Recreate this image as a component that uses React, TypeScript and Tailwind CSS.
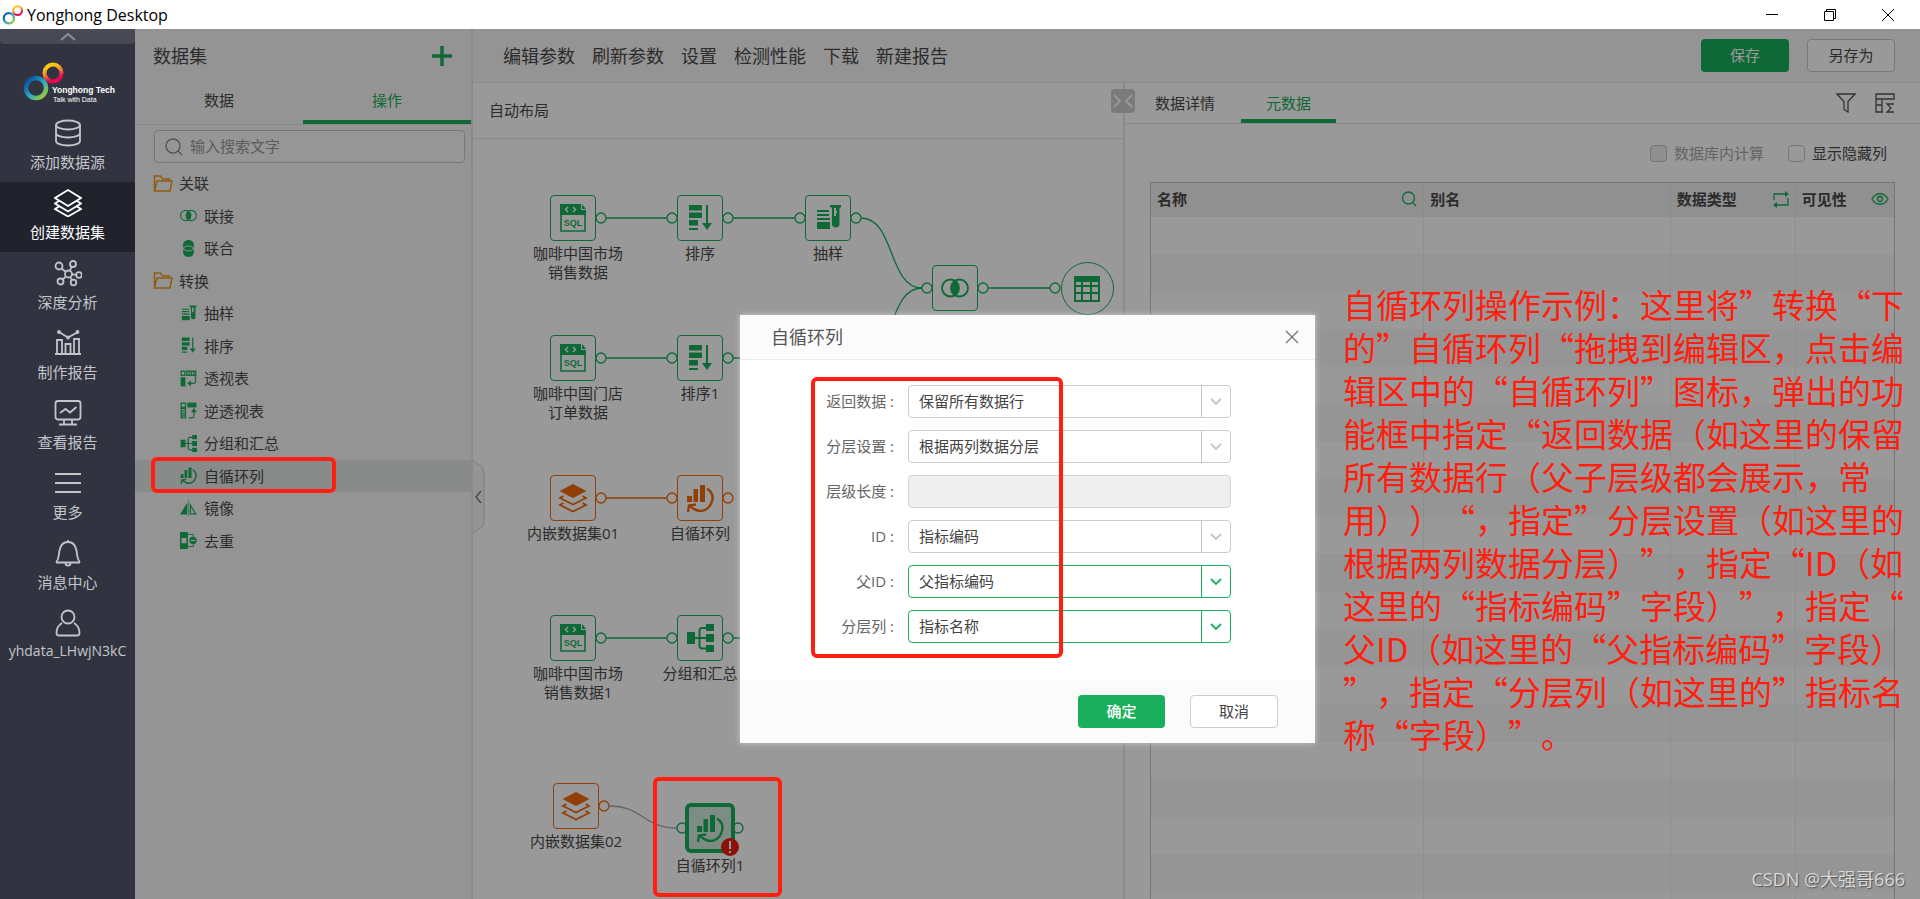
import { ReactNode } from 'react';
import clsx from 'clsx';

type IconProps = { name: string; className?: string };

// Line icons of the dark navigation bar, 28x28
const navIcons: Record<string, ReactNode> = {
  database: (
    <>
      <ellipse cx="14" cy="6" rx="12" ry="4.5" />
      <path d="M2 6v16c0 2.500 5 4.500 12 4.500s12-2 12-4.500V6M2 14c0 2.500 5 4.500 12 4.500s12-2 12-4.500" />
    </>
  ),
  layers: (
    <>
      <path d="M14 1 27 9 14 17 1 9z" />
      <path d="M5 12 1 14.500l13 8 13-8L23 12M5 17.500 1 20l13 7.500L27 20l-4-2.500" />
    </>
  ),
  network: (
    <>
      <circle cx="14.500" cy="15" r="3.500" />
      <circle cx="5" cy="7" r="3.500" />
      <circle cx="19" cy="5" r="3" />
      <circle cx="25" cy="16" r="2.800" />
      <circle cx="19.500" cy="23.500" r="2.800" />
      <circle cx="6.500" cy="22.500" r="3" />
      <path d="m7.500 9.500 4.500 3.500m4-1.500 1.500-3.500m.5 7.500 4 .2M16 18l2.200 3M12 17.500l-3.500 3" />
    </>
  ),
  chart: (
    <>
      <path d="M1 25h26M3 25V11h5v14m3.500 0V15h5v10m3.500 0V10h5v15M5 3l9 5.500L24 3" />
      <circle cx="5" cy="3" r="1" />
      <circle cx="14" cy="8.500" r="1" />
      <circle cx="23.500" cy="3" r="1" />
    </>
  ),
  monitor: (
    <>
      <rect x="1.500" y="2" width="25" height="18.500" rx="2.500" />
      <path d="m6 14 5.500-4 4.500 3.500L22.500 8M10 20.500V25m8-4.500V25M5 25.500h18" />
    </>
  ),
  menu: <path d="M1 5h26M1 14h26M1 23h26" />,
  bell: (
    <path d="M14 1v2M2 23.500h24M2 23.500c3.500-4 2.500-7 3.500-12C6.500 6 9.500 3 14 3s7.500 3 8.500 8.500c1 5 0 8 3.500 12M11.500 24c0 3.500 5 3.500 5 0" />
  ),
  user: (
    <>
      <circle cx="14" cy="8" r="6.500" />
      <path d="M8 14C4 16.500 2.500 20 2.500 24c0 2 1 2.500 2.500 2.500h18c1.500 0 2.500-.5 2.500-2.500 0-4-1.500-7.500-5.500-10" />
    </>
  ),
};

const NavIcon = ({ name, className }: IconProps) => (
  <svg viewBox="0 0 28 28" className={className} fill="none" stroke="currentColor" strokeWidth="1.800">
    {navIcons[name]}
  </svg>
);

// Operation icons, shared by the tree and by the canvas nodes, 28x28
const opIcons: Record<string, ReactNode> = {
  join: (
    <>
      <circle cx="9.500" cy="14" r="8.500" fill="none" stroke="currentColor" strokeWidth="1.800" />
      <circle cx="18.500" cy="14" r="8.500" fill="none" stroke="currentColor" strokeWidth="1.800" />
      <path d="M14 6.500c5 4 5 11 0 15-5-4-5-11 0-15z" />
    </>
  ),
  union: (
    <>
      <path d="M14 0c6 0 9 4 9 9 0 2-.5 3.500-1.500 5 1 1.500 1.500 3 1.500 5 0 5-3 9-9 9s-9-4-9-9c0-2 .5-3.500 1.500-5C5.500 12.500 5 11 5 9c0-5 3-9 9-9z" />
      <ellipse cx="14" cy="14" rx="7.500" ry="4" fill="none" stroke="#f7f7f7" strokeWidth="1.500" />
    </>
  ),
  sample: (
    <>
      <path d="M3 6h12v2H3zM3 10h12v2H3zM3 14h13v2H3zM3 18h13v7H3z" />
      <path d="M16 1h11v2.500h-1.500V21a4 4 0 0 1-7.500 0V3.500h-2z" />
      <path d="M20 4h2v3h1v2h-1v3h-2z" fill="#fff" />
    </>
  ),
  sort: (
    <>
      <path d="M3 1h13v5.500H3zM3 8.500h13V14H3zM3 16h9v5.500H3zM3 24h9v2H3z" />
      <path d="M20 1h2v18h4l-5 7-5-7h4z" />
    </>
  ),
  pivot: (
    <>
      <path d="M1 12h8v15H1z" />
      <path d="M2 2h6v7H2zM11 2h15v7H11zM15 2v7m4-7v7m4-7v7M25.500 9v10c0 2-1 3-3 3H15" fill="none" stroke="currentColor" strokeWidth="2" />
      <path d="M12 22l6-5v10z" />
    </>
  ),
  unpivot: (
    <>
      <path d="M12 1h15v8H12z" />
      <path d="M2 2h7v7H2zM2 11h7v15H2zM2 15h7M2 19h7M2 23h7M23 15v8c0 2-1 3-3 3h-6" fill="none" stroke="currentColor" strokeWidth="2" />
      <path d="M23 10l5 7H18z" />
    </>
  ),
  group: (
    <>
      <path d="M1 8h8v12H1zM20 0h8v7h-8zM20 10h8v8h-8zM20 21h8v7h-8z" />
      <path d="M8 14h13M21 4h-5c-2 0-2.500 1-2.500 2.500v15c0 2 1 3 2.500 3h5" fill="none" stroke="currentColor" strokeWidth="2" />
    </>
  ),
  loop: (
    <>
      <path d="M1 12h5v6H1zM7.500 5h4.500v13H7.500zM14 1h5v17h-5z" />
      <path d="M21 4.500c5 3.500 6.500 8 5 12.500-2 8-9 11.500-16 9-3-1-5-3-7-5" fill="none" stroke="currentColor" strokeWidth="2.400" />
      <path d="M2 28l1-6.500 7-1" fill="none" stroke="currentColor" strokeWidth="2.400" />
    </>
  ),
  mirror: (
    <>
      <path d="M12 4v20H0z" />
      <path d="M17 8v15h9z" fill="none" stroke="currentColor" strokeWidth="2" />
      <path d="M14 0v28" stroke="currentColor" strokeWidth="1.500" strokeDasharray="2 1.500" />
    </>
  ),
  dedupe: (
    <>
      <path d="M0 0h13v28H0zM2.500 10v8.500h8V10z" fillRule="evenodd" />
      <path d="M13 4h9v20h-9" fill="none" stroke="currentColor" strokeWidth="1.500" />
      <circle cx="21.500" cy="14" r="6" />
      <path d="M18 14h7" stroke="#f7f7f7" strokeWidth="2" />
    </>
  ),
  stack: (
    <>
      <path d="m14 0 13.500 7L14 14 .5 7z" />
      <path d="M4.500 12 1 14l13 6.500L27 14l-3.500-2M4.500 19 1 21l13 6.500L27 21l-3.500-2" fill="none" stroke="currentColor" strokeWidth="1.800" />
    </>
  ),
  sql: (
    <>
      <path d="M1 0h21v6h5v5H1z" />
      <path d="M23 0l4 5h-4z" />
      <path d="M2 10h24v17H2z" fill="none" stroke="currentColor" strokeWidth="1.600" />
      <path d="M9 3 6.500 5.500 9 8m5-5 2.500 2.500L14 8" fill="none" stroke="#fff" strokeWidth="1.400" />
      <text x="14" y="22" textAnchor="middle" fontSize="9" fontWeight="bold" fontFamily="Liberation Sans, sans-serif">
        SQL
      </text>
    </>
  ),
  table: (
    <path
      fillRule="evenodd"
      d="M1 1h26v26H1zM3 7v3h5V7zm7 0v3h7V7zm9 0v3h6V7zM3 12v5h5v-5zm7 0v5h7v-5zm9 0v5h6v-5zM3 19v6h5v-6zm7 0v6h7v-6zm9 0v6h6v-6z"
    />
  ),
};

const OpIcon = ({ name, className }: IconProps) => (
  <svg viewBox="0 0 28 28" className={clsx('overflow-visible', className)} fill="currentColor">
    {opIcons[name]}
  </svg>
);

const Rings = () => (
  <>
    <defs>
      <linearGradient id="cool" x1="0" y1="0" x2="1" y2="1">
        <stop offset="0.100" stopColor="#0b55a5" />
        <stop offset="0.550" stopColor="#2fa9c4" />
        <stop offset="0.950" stopColor="#a5cf2c" />
      </linearGradient>
      <linearGradient id="warm" x1="0.200" y1="0" x2="0.600" y2="1">
        <stop offset="0.150" stopColor="#fbc916" />
        <stop offset="0.500" stopColor="#f58233" />
        <stop offset="0.850" stopColor="#e6094f" />
      </linearGradient>
    </defs>
    <circle cx="30" cy="11" r="8.500" fill="none" stroke="url(#warm)" strokeWidth="4" />
    <circle cx="13" cy="26" r="10" fill="none" stroke="url(#cool)" strokeWidth="4.500" />
  </>
);

const navItems = [
  { icon: 'database', label: '添加数据源' },
  { icon: 'layers', label: '创建数据集', active: true },
  { icon: 'network', label: '深度分析' },
  { icon: 'chart', label: '制作报告' },
  { icon: 'monitor', label: '查看报告' },
  { icon: 'menu', label: '更多' },
  { icon: 'bell', label: '消息中心' },
  { icon: 'user', label: 'yhdata_LHwjN3kC', small: true },
];

const TitleBar = () => (
  <header className="flex h-[29px] shrink-0 items-center justify-between bg-white text-black">
    <div className="flex items-center gap-[3px] pl-[2px]">
      <svg viewBox="0 0 42 39" className="h-5 w-[22px]">
        <Rings />
      </svg>
      <h1 className="text-base font-normal">Yonghong Desktop</h1>
    </div>
    <div className="flex items-center pr-[3px]">
      <button aria-label="最小化" className="flex w-[58px] justify-center">
        <svg viewBox="0 0 14 14" className="h-[14px] w-[14px]" stroke="#000">
          <path d="M1 6.500h12" />
        </svg>
      </button>
      <button aria-label="还原" className="flex w-[58px] justify-center">
        <svg viewBox="0 0 14 14" className="h-[14px] w-[14px]" stroke="#000" fill="none">
          <path d="M1.500 3.500h9v9h-9zM3.500 3V1.500h9v9H11" />
        </svg>
      </button>
      <button aria-label="关闭" className="flex w-[58px] justify-center">
        <svg viewBox="0 0 14 14" className="h-[14px] w-[14px]" stroke="#000">
          <path d="m1 1 12 12M13 1 1 13" />
        </svg>
      </button>
    </div>
  </header>
);

const Sidebar = () => (
  <nav className="flex w-[135px] shrink-0 flex-col bg-[#313440] text-[#c4c5c9]">
    <button aria-label="收起" className="flex h-[15px] shrink-0 items-center justify-center rounded-b bg-[#474954]">
      <svg viewBox="0 0 16 8" className="h-2 w-4" fill="none" stroke="#8f919a" strokeWidth="2">
        <path d="m1 7 7-6 7 6" />
      </svg>
    </button>
    <div className="h-[68px] shrink-0 pt-[18px] pl-[23px]">
      <svg viewBox="0 0 100 42" className="h-[42px] w-[100px]" fontFamily="Liberation Sans, sans-serif">
        <Rings />
        <text x="29" y="31" fontSize="8.500" fontWeight="bold" fill="#fff">
          Yonghong Tech
        </text>
        <text x="30" y="40" fontSize="7" fill="#fff">
          Talk with Data
        </text>
      </svg>
    </div>
    <ul>
      {navItems.map((item) => (
        <li key={item.label}>
          <a
            href="#"
            className={clsx(
              'flex h-[70px] flex-col items-center gap-1 pt-[7px]',
              item.small ? 'text-sm' : 'text-[15px]',
              item.active && 'bg-[#20222c] text-white',
            )}
          >
            <NavIcon name={item.icon} className="h-7 w-7" />
            <span>{item.label}</span>
          </a>
        </li>
      ))}
    </ul>
  </nav>
);

const tree = [
  { label: '关联', folder: true },
  { label: '联接', icon: 'join' },
  { label: '联合', icon: 'union' },
  { label: '转换', folder: true },
  { label: '抽样', icon: 'sample' },
  { label: '排序', icon: 'sort' },
  { label: '透视表', icon: 'pivot' },
  { label: '逆透视表', icon: 'unpivot' },
  { label: '分组和汇总', icon: 'group' },
  { label: '自循环列', icon: 'loop', selected: true },
  { label: '镜像', icon: 'mirror' },
  { label: '去重', icon: 'dedupe' },
];

const OperationPanel = () => (
  <aside className="flex w-[338px] shrink-0 flex-col border-r-2 border-[#e6e6e6] bg-[#f7f7f7]">
    <div className="flex h-[53px] shrink-0 items-center justify-between pr-[18px] pl-[18px]">
      <h2 className="text-lg">数据集</h2>
      <button aria-label="新建" className="text-[#1aaf5d]">
        <svg viewBox="0 0 22 22" className="h-[22px] w-[22px]" stroke="currentColor" strokeWidth="3.500">
          <path d="M11 1v20M1 11h20" />
        </svg>
      </button>
    </div>
    <div className="grid h-[43px] shrink-0 grid-cols-2 border-b border-[#e6e6e6] text-[15px]">
      <button className="pb-[6px]">数据</button>
      <button className="border-b-4 border-[#1aaf5d] pb-[2px] text-[#1aaf5d]">操作</button>
    </div>
    <label className="mt-[5px] mr-[6px] ml-[19px] flex h-[33px] shrink-0 items-center gap-[7px] rounded-sm border border-[#c8c8c8] bg-[#fbfbfb] pl-[10px] text-[#8a8a8a]">
      <svg viewBox="0 0 18 18" className="h-[18px] w-[18px]" fill="none" stroke="currentColor" strokeWidth="1.300">
        <circle cx="8" cy="8" r="7" />
        <path d="m13 13 4 4" />
      </svg>
      <input
        aria-label="搜索"
        placeholder="输入搜索文字"
        className="min-w-0 flex-1 bg-transparent text-[15px] outline-none placeholder:text-[#999]"
      />
    </label>
    <ul className="mt-1 grid h-[390px] shrink-0 grid-rows-12 text-[15px]">
      {tree.map((row) => (
        <li
          key={row.label}
          className={clsx(
            'flex items-center gap-[6px]',
            row.folder ? 'pl-[18px]' : 'pl-[43px]',
            row.selected && 'bg-[#e3e8e5]',
          )}
        >
          {row.folder ? (
            <svg viewBox="0 0 20 17" className="h-[17px] w-5" fill="none" stroke="#f09a1e" strokeWidth="1.500">
              <path d="M1.500 16V1h6l2 3h7v2M1.500 16 4 6h15l-2 10z" />
            </svg>
          ) : (
            <span className="flex w-5 justify-center text-[#1aaf5d]">
              <OpIcon name={row.icon!} className="h-[17px] w-[17px]" />
            </span>
          )}
          {row.label}
        </li>
      ))}
    </ul>
  </aside>
);

const toolbar = ['编辑参数', '刷新参数', '设置', '检测性能', '下载', '新建报告'];

const Toolbar = () => (
  <div className="flex h-[54px] shrink-0 items-center justify-between border-b border-[#e6e6e6] bg-[#f7f7f7] pr-[25px] pl-[30px]">
    <div className="flex gap-[17px] text-lg">
      {toolbar.map((label) => (
        <button key={label}>{label}</button>
      ))}
    </div>
    <div className="flex gap-[18px] text-[15px]">
      <button className="h-[33px] w-[88px] rounded-sm bg-[#1aaf5d] text-white">保存</button>
      <button className="h-[33px] w-[88px] rounded-sm border border-[#c8c8c8] bg-white">另存为</button>
    </div>
  </div>
);

type FlowNode = {
  icon: string;
  x: number;
  y: number;
  label?: string[];
  labelShift?: number;
  orange?: boolean;
  input?: boolean;
  shape?: 'round' | 'selected';
};

// x and y are the centres of the nodes
const nodes: FlowNode[] = [
  { icon: 'sql', x: 100, y: 79, label: ['咖啡中国市场', '销售数据'], labelShift: 5 },
  { icon: 'sort', x: 227, y: 79, label: ['排序'], input: true },
  { icon: 'sample', x: 355, y: 79, label: ['抽样'], input: true },
  { icon: 'join', x: 482, y: 149, input: true },
  { icon: 'table', x: 614, y: 149, input: true, shape: 'round' },
  { icon: 'sql', x: 100, y: 219, label: ['咖啡中国门店', '订单数据'], labelShift: 5 },
  { icon: 'sort', x: 227, y: 219, label: ['排序1'], input: true },
  { icon: 'stack', x: 100, y: 359, label: ['内嵌数据集01'], orange: true },
  { icon: 'loop', x: 227, y: 359, label: ['自循环列'], orange: true, input: true },
  { icon: 'sql', x: 100, y: 499, label: ['咖啡中国市场', '销售数据1'], labelShift: 5 },
  { icon: 'group', x: 227, y: 499, label: ['分组和汇总'], input: true },
  { icon: 'stack', x: 103, y: 667, label: ['内嵌数据集02'], orange: true },
  { icon: 'loop', x: 237, y: 689, label: ['自循环列1'], input: true, shape: 'selected' },
];

const GREEN = '#1aaf5d';
const ORANGE = '#f0690a';

const links = [
  { d: 'M133 79H194', color: GREEN },
  { d: 'M260 79H322', color: GREEN },
  { d: 'M388 79C422 79 415 149 449 149', color: GREEN },
  { d: 'M388 219C422 219 415 149 449 149', color: GREEN },
  { d: 'M515 149H577', color: GREEN },
  { d: 'M133 219H194', color: GREEN },
  { d: 'M260 219H322', color: GREEN },
  { d: 'M133 359H194', color: ORANGE },
  { d: 'M133 499H194', color: GREEN },
  { d: 'M260 499H322', color: GREEN },
  { d: 'M136 667C170 667 170 689 204 689', color: '#a8a8a8' },
];

const Node = ({ node }: { node: FlowNode }) => {
  const color = node.orange ? ORANGE : GREEN;
  const middle = node.shape === 'round' ? 26 : node.shape === 'selected' ? 25 : 23;

  return (
    <div className="absolute flex w-0 flex-col items-center" style={{ left: node.x, top: node.y - middle, color }}>
      <button
        aria-label={node.label?.join('') ?? node.icon}
        className={clsx(
          'flex shrink-0 items-center justify-center border-current',
          !node.shape && 'h-[46px] w-[46px] rounded border',
          node.shape === 'round' && 'h-[53px] w-[53px] rounded-full border',
          node.shape === 'selected' && 'h-[50px] w-[50px] rounded-md border-4 bg-[#d3ebdd]',
        )}
      >
        <OpIcon name={node.icon} className="h-7 w-7" />
      </button>
      {node.label && (
        <div
          className="mt-[3px] text-center text-[15px] leading-[19px] whitespace-nowrap text-[#4a4a4a]"
          style={{ marginLeft: (node.labelShift ?? 0) * 2 }}
        >
          {node.label.map((line) => (
            <div key={line}>{line}</div>
          ))}
        </div>
      )}
      <svg className="absolute top-0 left-0 h-px w-px overflow-visible" fill="none" stroke="currentColor" strokeWidth="1.300">
        {node.input && <circle cx={node.shape === 'round' ? -32 : -28} cy={middle} r="5" />}
        {node.shape !== 'round' && <circle cx="28" cy={middle} r="5" />}
        {node.shape === 'selected' && (
          <>
            <circle cx="20" cy="44" r="9" fill="#ea2015" stroke="none" />
            <path d="M20 38v8m0 2v2" stroke="#fff" strokeWidth="2" />
          </>
        )}
      </svg>
    </div>
  );
};

const FlowCanvas = () => (
  <section className="relative flex min-w-0 flex-1 flex-col border-r-2 border-[#e6e6e6] bg-white">
    <div className="flex h-14 shrink-0 items-center border-b border-[#e6e6e6] pl-4 text-[15px]">
      <button>自动布局</button>
    </div>
    <div className="relative flex-1">
      <svg className="absolute inset-0 h-full w-full" fill="none" strokeWidth="1.300">
        {links.map((link) => (
          <path key={link.d} d={link.d} stroke={link.color} />
        ))}
      </svg>
      {nodes.map((node) => (
        <Node key={`${node.x}-${node.y}`} node={node} />
      ))}
    </div>
    <button aria-label="收起面板" className="absolute top-[374px] left-0 h-[80px] w-3 text-[#777]">
      <svg viewBox="0 0 12 80" className="h-[80px] w-3" fill="#f7f7f7" stroke="#d0d0d0">
        <path d="M-1 0c1 9 12 6 12 16v48c0 10-11 7-12 16" />
        <path d="M8 34 3 40l5 6" fill="none" stroke="currentColor" strokeWidth="1.400" />
      </svg>
    </button>
    <button
      aria-label="展开画布"
      className="absolute top-[6px] -right-[12px] z-10 flex h-6 w-6 items-center justify-center rounded-sm bg-[#cdcdcd]"
    >
      <svg viewBox="0 0 22 14" className="h-[14px] w-[22px]" fill="none" stroke="#fff" strokeWidth="1.800">
        <path d="m2 1 6 6-6 6M20 1l-6 6 6 6" />
      </svg>
    </button>
  </section>
);

const columns = [
  { label: '名称', width: 'w-[36.700%]', icon: 'search' },
  { label: '别名', width: 'w-[33.200%]' },
  { label: '数据类型', width: 'w-[16.800%]', icon: 'repeat' },
  { label: '可见性', width: 'w-[13.300%]', icon: 'eye' },
];

const ColumnIcon = ({ name }: { name: string }) => (
  <svg viewBox="0 0 16 16" className="h-4 w-4 overflow-visible" fill="none" stroke="#1aaf5d" strokeWidth="1.300">
    {name === 'search' && <path d="M7.500 1a6 6 0 1 1 0 12 6 6 0 0 1 0-12M12 12l3 3" />}
    {name === 'repeat' && (
      <>
        <path d="M1 9V3h12M15 7v7H3" />
        <path d="M12 0l4 3-4 3zM4 11l-4 3 4 3z" fill="#1aaf5d" stroke="none" />
      </>
    )}
    {name === 'eye' && (
      <>
        <path d="M0 8c4-7 12-7 16 0-4 7-12 7-16 0z" />
        <circle cx="8" cy="8" r="2.500" />
      </>
    )}
  </svg>
);

const MetadataPanel = () => (
  <section className="flex w-[795px] shrink-0 flex-col overflow-hidden bg-white">
    <div className="flex h-[41px] shrink-0 items-stretch border-b border-[#e6e6e6] pr-[25px] pl-[30px] text-[15px]">
      <button className="self-center">数据详情</button>
      <button className="ml-[26px] w-[95px] border-b-4 border-[#1aaf5d] pt-1 text-[#1aaf5d]">元数据</button>
      <div className="ml-auto flex items-center gap-[19px] text-[#555]">
        <button aria-label="筛选">
          <svg viewBox="0 0 20 20" className="h-5 w-5" fill="none" stroke="currentColor" strokeWidth="1.300">
            <path d="M1 1h18l-7 7.500V19l-4-2.500v-8z" />
          </svg>
        </button>
        <button aria-label="汇总">
          <svg viewBox="0 0 20 20" className="h-5 w-5" fill="none" stroke="currentColor" strokeWidth="1.300">
            <path d="M8 19H1V1h18v5H1m0 6h6M7 6v13M19 11h-7l4 4-4 4h7" />
          </svg>
        </button>
      </div>
    </div>
    <div className="flex h-[58px] shrink-0 items-center justify-end gap-6 pr-[33px] text-[15px]">
      <label className="flex items-center gap-[7px] text-[#a8a8a8]">
        <input type="checkbox" disabled className="h-[17px] w-[17px] appearance-none rounded-sm border border-[#c4c4c4] bg-[#efefef]" />
        数据库内计算
      </label>
      <label className="flex items-center gap-[7px]">
        <input type="checkbox" className="h-[17px] w-[17px] appearance-none rounded-sm border border-[#c4c4c4]" />
        显示隐藏列
      </label>
    </div>
    <div className="mr-[25px] ml-[25px] border border-b-0 border-[#c4c4c4]">
      <table className="w-full table-fixed border-collapse text-[15px]">
        <thead>
          <tr className="h-[34px] bg-[#f0f0f0]">
            {columns.map((column) => (
              <th key={column.label} className={clsx('border-r border-[#e8e8e8] px-[6px] pt-0 pb-[2px] last:border-r-0', column.width)}>
                <div className="flex items-center justify-between font-bold">
                  {column.label}
                  {column.icon && <ColumnIcon name={column.icon} />}
                </div>
              </th>
            ))}
          </tr>
        </thead>
        <tbody>
          {Array.from({ length: 19 }, (_, row) => (
            <tr key={row} className="odd:h-[37px] even:h-[38px] even:bg-[#f8f8f8]">
              {columns.map((column) => (
                <td key={column.label} className="border-r border-[#ededed] p-0 last:border-r-0" />
              ))}
            </tr>
          ))}
        </tbody>
      </table>
    </div>
  </section>
);

const fields = [
  { id: 'rows', label: '返回数据', value: '保留所有数据行' },
  { id: 'mode', label: '分层设置', value: '根据两列数据分层' },
  { id: 'length', label: '层级长度' },
  { id: 'key', label: 'ID', value: '指标编码' },
  { id: 'parent', label: '父ID', value: '父指标编码', green: true },
  { id: 'level', label: '分层列', value: '指标名称', green: true },
];

const LoopDialog = () => (
  <div role="dialog" aria-label="自循环列" className="relative w-[575px] bg-white text-[#444] shadow-[0_0_6px_rgba(255,255,255,0.5)]">
    <div className="flex h-[45px] items-center justify-between border-b border-[#ececec] bg-[#fbfbfb] pr-4 pl-[31px] text-[#555]">
      <h2 className="text-lg">自循环列</h2>
      <button aria-label="关闭">
        <svg viewBox="0 0 14 14" className="h-[14px] w-[14px]" stroke="#777" strokeWidth="1.300">
          <path d="m1 1 12 12M13 1 1 13" />
        </svg>
      </button>
    </div>
    <div className="flex flex-col gap-3 pt-[25px] pb-[37px] text-[15px]">
      {fields.map((field) => (
        <div key={field.id} className="flex h-[33px] items-center">
          <label htmlFor={field.id} className="w-[154px] text-right text-[#666]">
            {field.label} :
          </label>
          {field.value ? (
            <div
              className={clsx(
                'relative ml-[14px] h-full w-[323px] rounded-sm border',
                field.green ? 'border-[#1aaf5d] text-[#1aaf5d]' : 'border-[#ccc] text-[#c4c4c4]',
              )}
            >
              <select id={field.id} className="h-full w-full appearance-none bg-transparent pl-[10px] text-[#444]">
                <option>{field.value}</option>
              </select>
              <span className="pointer-events-none absolute inset-y-0 right-0 flex w-[29px] items-center justify-center border-l border-current">
                <svg viewBox="0 0 12 8" className="h-2 w-3" fill="none" stroke="currentColor" strokeWidth="1.800">
                  <path d="m1 1 5 5 5-5" />
                </svg>
              </span>
            </div>
          ) : (
            <input id={field.id} disabled className="ml-[14px] h-full w-[323px] rounded-sm border border-[#d4d4d4] bg-[#efefef]" />
          )}
        </div>
      ))}
    </div>
    <div className="flex h-[63px] items-center justify-end gap-[25px] bg-[#fbfbfb] pr-[37px] text-[15px]">
      <button className="h-[33px] w-[87px] rounded-sm bg-[#1aaf5d] font-medium text-white">确定</button>
      <button className="h-[33px] w-[88px] rounded-sm border border-[#ccc] bg-white">取消</button>
    </div>
    <div className="pointer-events-none absolute top-[62px] left-[71px] h-[281px] w-[252px] rounded-md border-4 border-[#ff1e10]" />
  </div>
);

const note = [
  '自循环列操作示例：这里将”转换“下',
  '的”自循环列“拖拽到编辑区，点击编',
  '辑区中的“自循环列”图标，弹出的功',
  '能框中指定“返回数据（如这里的保留',
  '所有数据行（父子层级都会展示，常',
  '用））“，指定”分层设置（如这里的',
  '根据两列数据分层）”，指定“ID（如',
  '这里的“指标编码”字段）”，指定“',
  '父ID（如这里的“父指标编码”字段）',
  '”，指定“分层列（如这里的”指标名',
  '称“字段）”。',
];

export default function App() {
  return (
    <div
      lang="zh-CN"
      className="relative flex h-screen flex-col overflow-hidden font-['Open_Sans','Noto_Sans_CJK_SC',sans-serif] text-[#4a4a4a]"
    >
      <TitleBar />
      <div className="flex min-h-0 flex-1">
        <Sidebar />
        <main className="relative flex min-w-0 flex-1 overflow-hidden">
          <OperationPanel />
          <div className="flex min-w-0 flex-1 flex-col">
            <Toolbar />
            <div className="flex min-h-0 flex-1">
              <FlowCanvas />
              <MetadataPanel />
            </div>
          </div>
          <div className="absolute inset-0 z-20 flex items-start justify-center bg-black/40 pt-[286px]">
            <LoopDialog />
          </div>
        </main>
      </div>

      <div className="pointer-events-none absolute top-[457px] left-[151px] z-30 h-9 w-[185px] rounded-md border-4 border-[#ff1e10]" />
      <div className="pointer-events-none absolute top-[777px] left-[653px] z-30 h-[120px] w-[129px] rounded-md border-4 border-[#ff1e10]" />
      <p className="pointer-events-none absolute top-[283px] left-[1343px] z-30 font-['Noto_Sans_CJK_SC',sans-serif] text-[33px] leading-[43px] whitespace-nowrap text-[#ff1e10] [text-spacing-trim:space-all]">
        {note.map((line) => (
          <span key={line} className="block">
            {line}
          </span>
        ))}
      </p>
      <span className="pointer-events-none absolute right-[15px] bottom-[6px] z-30 text-lg text-[#d8d8d8] [text-shadow:1px_1px_1px_#555]">
        CSDN @大强哥666
      </span>
    </div>
  );
}
